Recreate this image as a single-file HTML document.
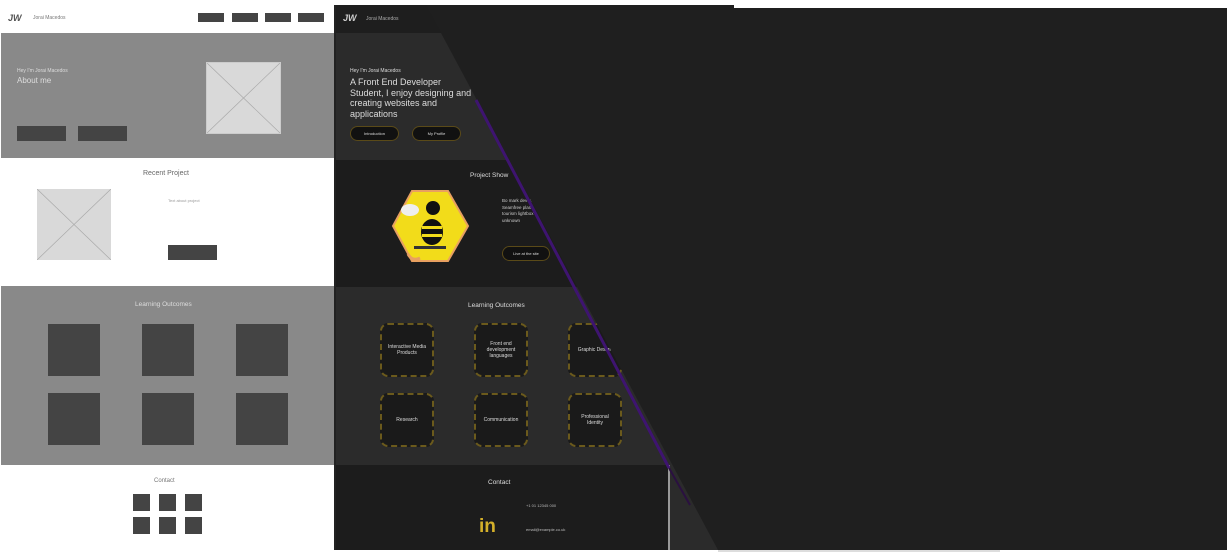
<!DOCTYPE html>
<html><head><meta charset="utf-8"><style>
*{margin:0;padding:0;box-sizing:border-box}
body{width:1227px;height:558px;background:#fff;position:relative;overflow:hidden;font-family:"Liberation Sans",sans-serif}
.a{position:absolute}
.t{position:absolute;color:#ddd;font-size:6px;white-space:nowrap}
.lo{position:absolute;width:54px;height:54px;background:#1a1a1a;border:2px dashed #6b5a1c;border-radius:8px;color:#ddd;font-size:5px;display:flex;align-items:center;justify-content:center;text-align:center;padding:4px}
.btn{position:absolute;height:15px;border:1.5px solid #5a4a18;border-radius:8px;background:#111;color:#ddd;font-size:4px;display:flex;align-items:center;justify-content:center}
</style></head><body>
<div class="a" style="left:0;top:0;width:336px;height:32px;background:#fff"></div>
<div class="t" style="left:8px;top:13px;color:#555;font-size:9px;font-style:italic;font-weight:bold">JW</div>
<div class="t" style="left:33px;top:15px;color:#777;font-size:5px">Jorai Macedos</div>
<div class="a" style="left:198px;top:13px;width:26px;height:9px;background:#444"></div>
<div class="a" style="left:232px;top:13px;width:26px;height:9px;background:#444"></div>
<div class="a" style="left:265px;top:13px;width:26px;height:9px;background:#444"></div>
<div class="a" style="left:298px;top:13px;width:26px;height:9px;background:#444"></div>
<div class="a" style="left:1px;top:33px;width:335px;height:125px;background:#898989"></div>
<div class="t" style="left:17px;top:68px;font-size:5px">Hey I'm Jorai Macedos</div>
<div class="t" style="left:17px;top:76px;font-size:8px">About me</div>
<div class="a" style="left:206px;top:62px;width:75px;height:72px;background:#d9d9d9;border:1px solid #ccc"><svg width="73" height="70"><path d="M0 0L73 70M73 0L0 70" stroke="#aaa" stroke-width=".7"/></svg></div>
<div class="a" style="left:17px;top:126px;width:49px;height:15px;background:#444"></div>
<div class="a" style="left:78px;top:126px;width:49px;height:15px;background:#444"></div>
<div class="t" style="left:143px;top:170px;color:#666;font-size:7px">Recent Project</div>
<div class="a" style="left:37px;top:189px;width:74px;height:71px;background:#d9d9d9"><svg width="74" height="71"><path d="M0 0L74 71M74 0L0 71" stroke="#aaa" stroke-width=".7"/></svg></div>
<div class="t" style="left:168px;top:198px;color:#999;font-size:4px">Text about project</div>
<div class="a" style="left:168px;top:245px;width:49px;height:15px;background:#444"></div>
<div class="a" style="left:1px;top:286px;width:335px;height:179px;background:#898989"></div>
<div class="t" style="left:135px;top:301px;font-size:6.5px">Learning Outcomes</div>
<div class="a" style="left:48px;top:324px;width:52px;height:52px;background:#444"></div>
<div class="a" style="left:142px;top:324px;width:52px;height:52px;background:#444"></div>
<div class="a" style="left:236px;top:324px;width:52px;height:52px;background:#444"></div>
<div class="a" style="left:48px;top:393px;width:52px;height:52px;background:#444"></div>
<div class="a" style="left:142px;top:393px;width:52px;height:52px;background:#444"></div>
<div class="a" style="left:236px;top:393px;width:52px;height:52px;background:#444"></div>
<div class="t" style="left:154px;top:478px;color:#777;font-size:6px">Contact</div>
<div class="a" style="left:133px;top:494px;width:17px;height:17px;background:#444"></div>
<div class="a" style="left:159px;top:494px;width:17px;height:17px;background:#444"></div>
<div class="a" style="left:185px;top:494px;width:17px;height:17px;background:#444"></div>
<div class="a" style="left:133px;top:517px;width:17px;height:17px;background:#444"></div>
<div class="a" style="left:159px;top:517px;width:17px;height:17px;background:#444"></div>
<div class="a" style="left:185px;top:517px;width:17px;height:17px;background:#444"></div>
<div class="a" style="left:334px;top:5px;width:2px;height:545px;background:#222"></div>
<div class="a" style="left:336px;top:5px;width:332px;height:28px;background:#1e1e1e"></div>
<div class="t" style="left:343px;top:13px;color:#ccc;font-size:9px;font-style:italic;font-weight:bold">JW</div>
<div class="t" style="left:366px;top:16px;color:#aaa;font-size:5px">Jorai Macedos</div>
<div class="a" style="left:336px;top:33px;width:332px;height:127px;background:#2b2b2b"></div>
<div class="t" style="left:350px;top:68px;font-size:5px">Hey I'm Jorai Macedos</div>
<div class="t" style="left:350px;top:77px;font-size:9px;line-height:10.5px">A Front End Developer<br>Student, I enjoy designing and<br>creating websites and<br>applications</div>
<div class="btn" style="left:350px;top:126px;width:49px">Introduction</div>
<div class="btn" style="left:412px;top:126px;width:49px">My Profile</div>
<div class="a" style="left:336px;top:160px;width:332px;height:127px;background:#1c1c1c"></div>
<div class="t" style="left:470px;top:172px;font-size:6.5px">Project Show</div>
<svg class="a" style="left:390px;top:188px" width="80" height="80"><polygon points="22,3 58,3 78,38 58,73 22,73 3,38" fill="#f2dc1a" stroke="#e8a060" stroke-width="2"/><ellipse cx="20" cy="22" rx="9" ry="6" fill="#eee"/><circle cx="43" cy="20" r="7" fill="#111"/><ellipse cx="42" cy="44" rx="11" ry="13" fill="#111"/><rect x="32" y="38" width="20" height="3" fill="#f2dc1a"/><rect x="32" y="46" width="20" height="3" fill="#f2dc1a"/><rect x="24" y="58" width="32" height="3" fill="#333"/><path d="M18 66q4 8 12 4" stroke="#e8a060" stroke-width="3" fill="none"/></svg>
<div class="t" style="left:502px;top:198px;font-size:4.5px;line-height:6.5px;white-space:normal;width:40px;color:#ccc">Bo mark developer Seamfree plans tourism lightbox unknown</div>
<div class="btn" style="left:502px;top:246px;width:48px">Live at the site</div>
<div class="a" style="left:336px;top:287px;width:400px;height:263px;background:#2b2b2b"></div>
<div class="t" style="left:468px;top:302px;font-size:6.5px">Learning Outcomes</div>
<div class="lo" style="left:380px;top:323px">Interactive Media Products</div>
<div class="lo" style="left:474px;top:323px">Front end development languages</div>
<div class="lo" style="left:568px;top:323px">Graphic Design</div>
<div class="lo" style="left:380px;top:393px">Research</div>
<div class="lo" style="left:474px;top:393px">Communication</div>
<div class="lo" style="left:568px;top:393px">Professional Identity</div>
<div class="a" style="left:336px;top:465px;width:332px;height:85px;background:#1c1c1c"></div>
<div class="t" style="left:488px;top:479px;font-size:6.5px">Contact</div>
<div class="t" style="left:526px;top:503px;font-size:4px;color:#bbb">+1 01 12345 000</div>
<div class="t" style="left:479px;top:516px;font-size:19px;font-weight:bold;color:#d4b02a">in</div>
<div class="t" style="left:526px;top:527px;font-size:4px;color:#bbb">email@example.co.uk</div>
<div class="a" style="left:668px;top:465px;width:2px;height:85px;background:#999"></div>
<svg class="a" style="left:0;top:0" width="1227" height="558">
<polygon points="426,5 734,5 734,8 1227,8 1227,550 718,550" fill="#1f1f1f"/>
<line x1="476" y1="100" x2="669" y2="468" stroke="#3e1470" stroke-width="3"/>
<line x1="669" y1="468" x2="690" y2="505" stroke="#2a1040" stroke-width="2"/>
<line x1="718" y1="551" x2="1000" y2="551" stroke="#bbb" stroke-width="1"/>
</svg>
</body></html>
